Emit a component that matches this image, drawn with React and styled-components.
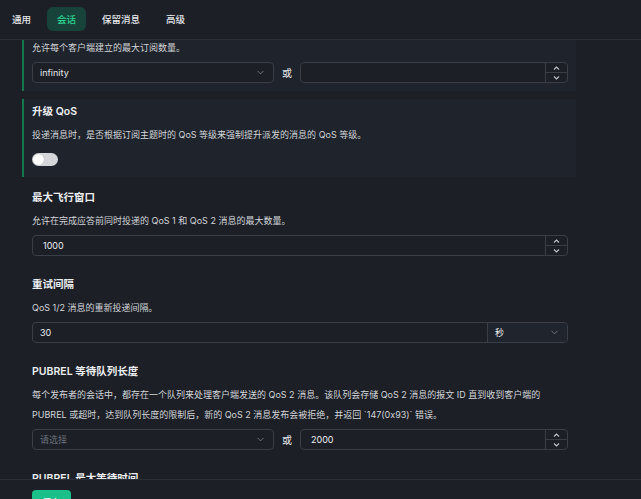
import { useLayoutEffect, useRef } from "react";
import styled, { createGlobalStyle } from "styled-components";
import { ChevronDown } from "lucide-react";

const GlobalStyle = createGlobalStyle`
  html, body {
    margin: 0;
    padding: 0;
    background: #1c1f26;
    overflow: hidden;
  }
  * {
    box-sizing: border-box;
  }
  body {
    font-family: Inter, "Noto Sans CJK SC", sans-serif;
    color: #e6e8eb;
  }
`;

const Page = styled.div`
  display: flex;
  flex-direction: column;
  width: 641px;
  background: #1c1f26;
`;

const Header = styled.nav`
  display: flex;
  align-items: center;
  gap: 6px;
  height: 40px;
  padding: 0 2px 1px;
  border-bottom: 1px solid #2b2f37;
`;

const Tab = styled.div`
  height: 24px;
  padding: 0 10px;
  display: flex;
  align-items: center;
  border-radius: 6px;
  font-size: 9.5px;
  font-weight: 500;
  color: ${({ $active }) => ($active ? "#2ed191" : "#e6e8eb")};
  background: ${({ $active }) => ($active ? "#17433a" : "transparent")};
`;

const Scroll = styled.div`
  height: 439px;
  overflow-y: auto;
  scrollbar-width: none;
  &::-webkit-scrollbar {
    display: none;
  }
`;

const List = styled.div`
  display: flex;
  flex-direction: column;
  gap: 8px;
  width: 554px;
  margin-left: 22px;
  padding: 16px 0 24px;
`;

const Section = styled.section`
  padding: 5px 8px 8px;
  border-left: 2px solid ${({ $active }) => ($active ? "#14784f" : "transparent")};
  background: ${({ $active }) => ($active ? "#1f232b" : "transparent")};
`;

const Title = styled.h3`
  margin: 0;
  font-size: 10.5px;
  line-height: 16px;
  font-weight: 600;
  color: #eceef1;
`;

const Desc = styled.p`
  margin: 5px 0 0;
  font-size: 9px;
  line-height: 20px;
  color: #d2d5d9;
`;

const Row = styled.div`
  margin-top: 4px;
  display: flex;
  align-items: center;
  gap: 8px;
`;

const Or = styled.span`
  font-size: 10px;
  color: #e6e8eb;
`;

const SelectBox = styled.div`
  width: ${({ $width }) => $width || "242px"};
  height: 21px;
  padding: 0 7px;
  display: flex;
  align-items: center;
  justify-content: space-between;
  border: 1px solid #3a3e46;
  border-radius: 4px;
  background: #1c1f26;
  font-size: 9px;
  color: ${({ $placeholder }) => ($placeholder ? "#6b7079" : "#e6e8eb")};
  svg {
    color: #8b9098;
  }
`;

const NumberBox = styled.div`
  flex: 1;
  height: 21px;
  display: flex;
  border: 1px solid #3a3e46;
  border-radius: 4px;
  background: #1c1f26;
  overflow: hidden;
`;

const Value = styled.div`
  flex: 1;
  display: flex;
  align-items: center;
  padding-left: ${({ $pad }) => $pad || "10px"};
  font-size: 9px;
  color: #eceef1;
`;

const Stepper = styled.div`
  width: 22px;
  display: flex;
  flex-direction: column;
  border-left: 1px solid #3a3e46;
`;

const Step = styled.div`
  flex: 1;
  display: flex;
  align-items: center;
  justify-content: center;
  & + & {
    border-top: 1px solid #3a3e46;
  }
`;

const Group = styled.div`
  flex: 1;
  height: 21px;
  display: flex;
  border: 1px solid #3a3e46;
  border-radius: 4px;
  overflow: hidden;
`;

const Unit = styled.div`
  width: 80px;
  padding: 0 7px;
  display: flex;
  align-items: center;
  justify-content: space-between;
  border-left: 1px solid #3a3e46;
  background: #20242c;
  font-size: 9px;
  color: #eceef1;
  svg {
    color: #8b9098;
  }
`;

const SwitchWrap = styled.div`
  margin: 8px 0 3px;
`;

const Track = styled.div`
  width: 26px;
  height: 13px;
  padding: 1px;
  border-radius: 7px;
  background: #d4d6da;
  display: flex;
  justify-content: ${({ $on }) => ($on ? "flex-end" : "flex-start")};
`;

const Knob = styled.div`
  width: 11px;
  height: 11px;
  border-radius: 50%;
  background: #ffffff;
  box-shadow: 0 0 1px rgba(0, 0, 0, 0.3);
`;

const Footer = styled.footer`
  padding: 10px 32px 12px;
  border-top: 1px solid #2b2f37;
  background: #1c1f26;
`;

const SaveButton = styled.button`
  height: 24px;
  padding: 0 10px;
  border: none;
  border-radius: 4px;
  background: #1bbf8a;
  color: #ffffff;
  font-family: inherit;
  font-size: 9.5px;
  font-weight: 500;
`;

function Caret({ up }) {
  return (
    <svg width="7" height="4" viewBox="0 0 7 4" fill="none">
      <polyline
        points={up ? "1,3.5 3.5,1 6,3.5" : "1,0.5 3.5,3 6,0.5"}
        stroke="#c3c7cd"
        strokeWidth="1.1"
      />
    </svg>
  );
}

function NumberInput({ value }) {
  return (
    <NumberBox>
      <Value>{value}</Value>
      <Stepper>
        <Step>
          <Caret up />
        </Step>
        <Step>
          <Caret />
        </Step>
      </Stepper>
    </NumberBox>
  );
}

function Select({ value, placeholder, width }) {
  return (
    <SelectBox $width={width} $placeholder={!value}>
      <span>{value || placeholder}</span>
      <ChevronDown size={11} strokeWidth={1.6} />
    </SelectBox>
  );
}

const tabs = ["通用", "会话", "保留消息", "高级"];

export default function App() {
  const scrollRef = useRef(null);

  useLayoutEffect(() => {
    if (scrollRef.current) scrollRef.current.scrollTop = 44;
  }, []);

  return (
    <Page>
      <GlobalStyle />
      <Header>
        {tabs.map((t) => (
          <Tab key={t} $active={t === "会话"}>
            {t}
          </Tab>
        ))}
      </Header>

      <Scroll ref={scrollRef}>
        <List>
          <Section $active>
            <Title>最大订阅数量</Title>
            <Desc>允许每个客户端建立的最大订阅数量。</Desc>
            <Row>
              <Select value="infinity" />
              <Or>或</Or>
              <NumberInput value="" />
            </Row>
          </Section>

          <Section $active>
            <Title>升级 QoS</Title>
            <Desc>投递消息时，是否根据订阅主题时的 QoS 等级来强制提升派发的消息的 QoS 等级。</Desc>
            <SwitchWrap>
              <Track>
                <Knob />
              </Track>
            </SwitchWrap>
          </Section>

          <Section>
            <Title>最大飞行窗口</Title>
            <Desc>允许在完成应答前同时投递的 QoS 1 和 QoS 2 消息的最大数量。</Desc>
            <Row>
              <NumberInput value="1000" />
            </Row>
          </Section>

          <Section>
            <Title>重试间隔</Title>
            <Desc>QoS 1/2 消息的重新投递间隔。</Desc>
            <Row>
              <Group>
                <Value $pad="7px">30</Value>
                <Unit>
                  <span>秒</span>
                  <ChevronDown size={11} strokeWidth={1.6} />
                </Unit>
              </Group>
            </Row>
          </Section>

          <Section>
            <Title>PUBREL 等待队列长度</Title>
            <Desc>
              每个发布者的会话中，都存在一个队列来处理客户端发送的 QoS 2 消息。该队列会存储 QoS 2 消息的报文 ID
              直到收到客户端的 PUBREL 或超时，达到队列长度的限制后，新的 QoS 2 消息发布会被拒绝，并返回 `147(0x93)` 错误。
            </Desc>
            <Row>
              <Select placeholder="请选择" />
              <Or>或</Or>
              <NumberInput value="2000" />
            </Row>
          </Section>

          <Section>
            <Title>PUBREL 最大等待时间</Title>
            <Desc>PUBREL 的最大等待时间。</Desc>
            <Row>
              <NumberInput value="300" />
            </Row>
          </Section>
        </List>
      </Scroll>

      <Footer>
        <SaveButton>保存</SaveButton>
      </Footer>
    </Page>
  );
}
